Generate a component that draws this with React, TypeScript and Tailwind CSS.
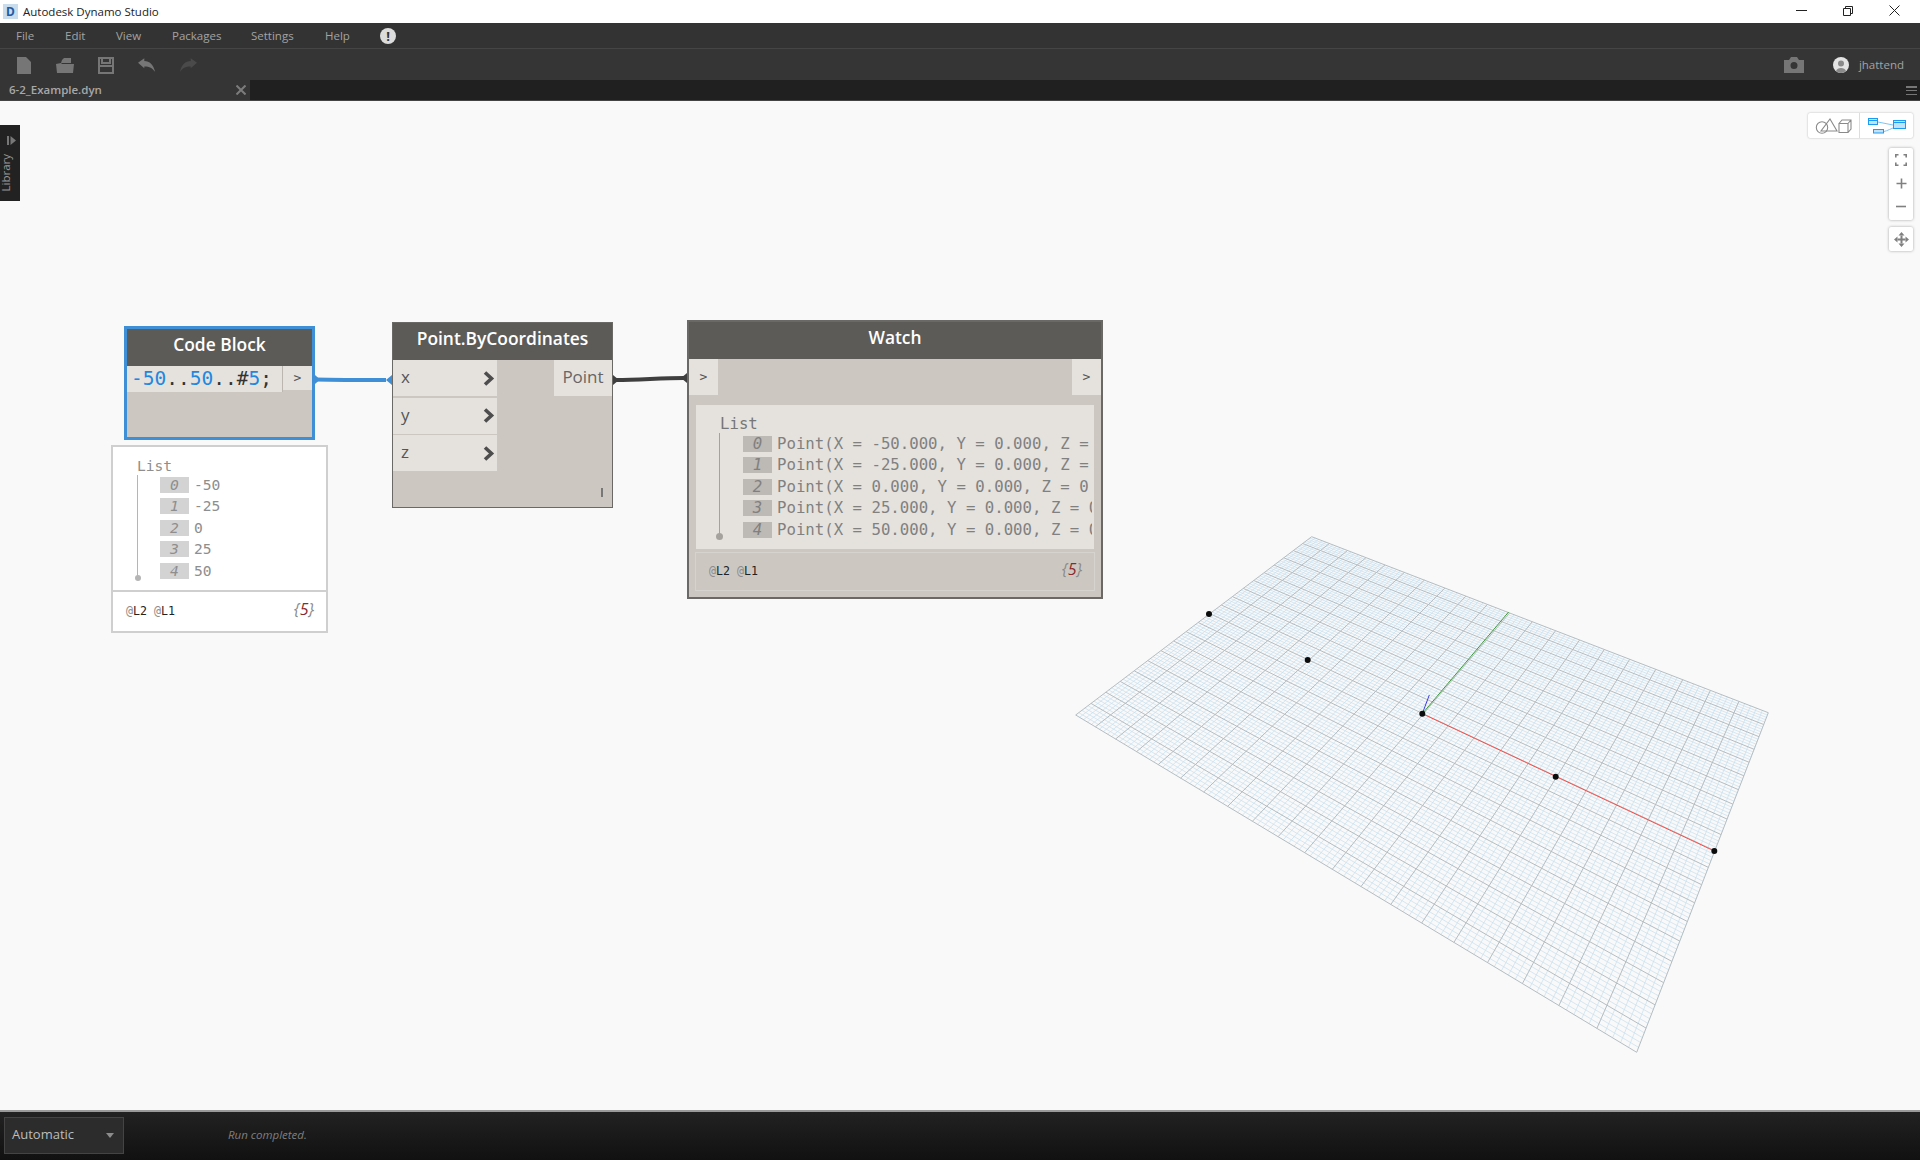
import React from "react";

// corners of the background grid, in page pixels
const quad = { l: [1075.7, 715], b: [1636.7, 1052.3], r: [1768.3, 712.7], t: [1311.7, 536.7] };

function makeProject() {
  const [x0, y0] = quad.l;
  const [x1, y1] = quad.b;
  const [x2, y2] = quad.r;
  const [x3, y3] = quad.t;
  const dx1 = x1 - x2;
  const dx2 = x3 - x2;
  const sx = x0 - x1 + x2 - x3;
  const dy1 = y1 - y2;
  const dy2 = y3 - y2;
  const sy = y0 - y1 + y2 - y3;
  const den = dx1 * dy2 - dx2 * dy1;
  const g = (sx * dy2 - dx2 * sy) / den;
  const h = (dx1 * sy - sx * dy1) / den;
  const a = x1 - x0 + g * x1;
  const b = x3 - x0 + h * x3;
  const d = y1 - y0 + g * y1;
  const e = y3 - y0 + h * y3;
  return (u: number, v: number) => {
    const w = g * u + h * v + 1;
    return [(a * u + b * v + x0) / w, (d * u + e * v + y0) / w];
  };
}

function gridPaths() {
  const p = makeProject();
  let minor = "";
  let major = "";
  for (let i = 0; i <= 100; i++) {
    const t = i / 100;
    const a = p(t, 0);
    const b = p(t, 1);
    const c = p(0, t);
    const d = p(1, t);
    const seg = `M${a[0].toFixed(1)} ${a[1].toFixed(1)}L${b[0].toFixed(1)} ${b[1].toFixed(1)}M${c[0].toFixed(1)} ${c[1].toFixed(1)}L${d[0].toFixed(1)} ${d[1].toFixed(1)}`;
    if (i % 5 === 0) major += seg;
    else minor += seg;
  }
  return { minor, major };
}

const mono = "font-['DejaVu_Sans_Mono',monospace]";
const header =
  "flex h-[37px] items-center justify-center bg-[#5d5b58] pb-[6px] font-['Open_Sans',sans-serif] text-[17.4px] font-semibold text-white";

function Menu() {
  const items = [
    { label: "File", w: "w-[49px]" },
    { label: "Edit", w: "w-[51px]" },
    { label: "View", w: "w-[56px]" },
    { label: "Packages", w: "w-[79px]" },
    { label: "Settings", w: "w-[74px]" },
    { label: "Help", w: "w-[55px]" },
  ];
  return (
    <div className="flex h-[26px] items-center border-b border-[#454545] bg-[#333333] pl-[16px] pt-[1px] font-['Open_Sans',sans-serif] text-[11.5px] text-[#a3a3a3]">
      {items.map((it) => (
        <span key={it.label} className={it.w}>
          {it.label}
        </span>
      ))}
      <span className="flex h-[16px] w-[16px] items-center justify-center rounded-full bg-[#dcdcdc] text-[13px] font-bold leading-none text-[#333333]">
        !
      </span>
    </div>
  );
}

function Toolbar() {
  return (
    <div className="flex h-[31px] items-center justify-between bg-[#353535] pl-[3px] pr-[16px] pt-[1px]">
      <div className="flex items-center">
        <div className="flex w-[41px] justify-center">
          <svg width="14" height="17" viewBox="0 0 14 17" fill="#767676">
            <path d="M0 0h9l5 5v12H0z" />
          </svg>
        </div>
        <div className="flex w-[41px] justify-center">
          <svg width="20" height="17" viewBox="0 0 20 17" fill="#767676">
            <path d="M1 7l5-1 1-3 2-2h7v5H7l-1 1h13l-1 9H2z" />
          </svg>
        </div>
        <div className="flex w-[41px] justify-center">
          <svg width="16" height="17" viewBox="0 0 16 17" fill="none" stroke="#767676" strokeWidth="2">
            <path d="M1 1h14v15H1z" />
            <path d="M4 1v5h8V1M1 9h14" />
          </svg>
        </div>
        <div className="flex w-[41px] justify-center">
          <svg width="18" height="15" viewBox="0 0 20 16" fill="#767676">
            <path d="M0 5l7-5v3c6 0 10 4 12 12-3-4-6-6-12-6v2z" />
          </svg>
        </div>
        <div className="flex w-[41px] justify-center">
          <svg width="18" height="15" viewBox="0 0 20 16" fill="#4a4a4a">
            <path d="M20 5l-7-5v3C7 3 3 7 1 15c3-4 6-6 12-6v2z" />
          </svg>
        </div>
      </div>
      <div className="flex items-center">
        <svg width="22" height="16" viewBox="0 0 22 16" fill="#767676" className="mr-[28px]">
          <path fillRule="evenodd" d="M1 3h5l2-3h6l2 3h5v13H1zM11 5a3.500 3.500 0 100 7 3.500 3.500 0 000-7z" />
        </svg>
        <svg width="16" height="16" viewBox="0 0 16 16" className="mr-[10px]">
          <circle cx="8" cy="8" r="8" fill="#e4e4e4" />
          <circle cx="8" cy="6.500" r="3" fill="#8a8a8a" />
          <path d="M3 14c1-4 9-4 10 0a8 8 0 01-10 0z" fill="#8a8a8a" />
        </svg>
        <span className="font-['Open_Sans',sans-serif] text-[11.5px] text-[#a3a3a3]">jhattend</span>
      </div>
    </div>
  );
}

function TabBar() {
  return (
    <div className="flex h-[21px] border-b border-[#444444] bg-[#202020]">
      <div className="flex w-[250px] items-center justify-between bg-[#353535] pl-[9px] pr-[4px] font-['Open_Sans',sans-serif] text-[11.5px] font-semibold text-[#a8a8a8]">
        <span>6-2_Example.dyn</span>
        <svg width="10" height="10" viewBox="0 0 10 10" stroke="#7c7c7c" strokeWidth="2">
          <path d="M0.500 0.500l9 9M9.500 0.500l-9 9" />
        </svg>
      </div>
      <div className="ml-auto mr-[3px] mt-[6px] flex h-[9px] w-[11px] flex-col justify-between">
        <div className="h-[1.5px] bg-[#777777]" />
        <div className="h-[1.5px] bg-[#777777]" />
        <div className="h-[1.5px] bg-[#777777]" />
      </div>
    </div>
  );
}

function ListRow({ i, text, boxColor }: { i: number; text: string; boxColor: string }) {
  return (
    <div className="flex h-[21.5px] items-center">
      <span className={`flex h-[16px] w-[29px] shrink-0 items-center justify-center italic ${boxColor}`}>{i}</span>
      <span className="ml-[5px] max-w-[315px] overflow-hidden whitespace-pre">{text}</span>
    </div>
  );
}

function Levels() {
  return (
    <span className={`${mono} text-[11.6px] text-[#222222]`}>
      <span className="text-[#8c8c8c]">@</span>L2 <span className="text-[#8c8c8c]">@</span>L1
    </span>
  );
}

function Count() {
  return (
    <span className="mb-[6px] font-['Open_Sans',sans-serif] text-[16px] italic text-[#8b8b8b]">
      {"{"}
      <span className="text-[#8a2a2a]">5</span>
      {"}"}
    </span>
  );
}

function CodeBlock() {
  return (
    <div className="absolute left-[124px] top-[225px] h-[114px] w-[191px] border-[3px] border-[#3f8fd6] bg-[#ccc8c1]">
      <div className={header}>Code Block</div>
      <div className="flex">
        <div className={`h-[26px] w-[156px] border-r border-[#bbb7b0] bg-[#e5e2de] pl-[4px] text-[19.5px] leading-[26px] ${mono} text-[#333333]`}>
          <span className="text-[#1f87e0]">-50</span>..<span className="text-[#1f87e0]">50</span>..#<span className="text-[#1f87e0]">5</span>;
        </div>
        <div className={`flex h-[24px] flex-1 items-center justify-center bg-[#e5e2de] text-[13px] text-[#555555] ${mono}`}>&gt;</div>
      </div>
    </div>
  );
}

function CodePreview() {
  const rows = ["-50", "-25", "0", "25", "50"];
  return (
    <div className={`absolute left-[111px] top-[344px] flex h-[188px] w-[217px] flex-col border-2 border-[#cfcfcf] bg-white ${mono} text-[14.6px] text-[#8e8e8e]`}>
      <div className="relative h-[145px] border-b-2 border-[#cfcfcf] pl-[47px] pt-[27px]">
        <span className="absolute left-[24px] top-[8px]">List</span>
        <div className="absolute bottom-[12px] left-[24px] top-[28px] w-px bg-[#b5b5b5]" />
        <div className="absolute bottom-[9px] left-[22px] h-[6px] w-[6px] rounded-full bg-[#b5b5b5]" />
        {rows.map((r, i) => (
          <ListRow key={i} i={i} text={r} boxColor="bg-[#d3d3d3]" />
        ))}
      </div>
      <div className="flex flex-1 items-center justify-between pl-[13px] pr-[12px]">
        <Levels />
        <Count />
      </div>
    </div>
  );
}

function InPort({ name }: { name: string }) {
  return (
    <div className="flex h-[36px] w-[104px] items-center justify-between bg-[#e5e2de] pb-[2px] pl-[8px] pr-[2px] font-['Open_Sans',sans-serif] text-[17px] text-[#555555]">
      <span>{name}</span>
      <svg width="12" height="15" viewBox="0 0 12 15" fill="none" stroke="#4d4d4d" strokeWidth="3.6" className="mt-[2px]">
        <path d="M2 1.500l6.500 6-6.500 6" />
      </svg>
    </div>
  );
}

function PointNode() {
  return (
    <div className="absolute left-[392px] top-[221px] h-[186px] w-[221px] border border-[#6b6965] bg-[#ccc8c1]">
      <div className={header}>Point.ByCoordinates</div>
      <div className="flex items-start justify-between">
        <div className="flex flex-col gap-[1.5px]">
          <InPort name="x" />
          <InPort name="y" />
          <InPort name="z" />
        </div>
        <div className="flex h-[36px] w-[58px] items-center justify-center bg-[#e5e2de] pb-[2px] font-['Open_Sans',sans-serif] text-[17px] text-[#666666]">
          Point
        </div>
      </div>
      <div className="absolute bottom-[10px] right-[9px] h-[9px] w-[2px] bg-[#777777]" />
    </div>
  );
}

function WatchNode() {
  const rows = [
    "Point(X = -50.000, Y = 0.000, Z =",
    "Point(X = -25.000, Y = 0.000, Z =",
    "Point(X = 0.000, Y = 0.000, Z = 0",
    "Point(X = 25.000, Y = 0.000, Z = 0",
    "Point(X = 50.000, Y = 0.000, Z = 0",
  ];
  return (
    <div className="absolute left-[687px] top-[219px] h-[279px] w-[416px] border-2 border-[#6b6965] bg-[#ccc8c1]">
      <div className={header}>Watch</div>
      <div className={`flex justify-between ${mono} text-[13px] text-[#555555]`}>
        <div className="flex h-[36px] w-[29px] items-center justify-center bg-[#e5e2de]">&gt;</div>
        <div className="flex h-[36px] w-[29px] items-center justify-center bg-[#e5e2de]">&gt;</div>
      </div>
      <div className={`relative mx-[7px] mt-[10px] h-[144px] overflow-hidden bg-[#e5e2de] pl-[47px] pt-[28px] ${mono} text-[15.7px] text-[#808080]`}>
        <span className="absolute left-[24px] top-[7px] text-[#777777]">List</span>
        <div className="absolute bottom-[12px] left-[23px] top-[28px] w-px bg-[#a5a29e]" />
        <div className="absolute bottom-[9px] left-[20px] h-[7px] w-[7px] rounded-full bg-[#a5a29e]" />
        {rows.map((r, i) => (
          <ListRow key={i} i={i} text={r} boxColor="bg-[#bdb9b4]" />
        ))}
      </div>
      <div className="mx-[6px] mt-[3px] flex h-[39px] items-center justify-between border border-[#d6d3ce] pl-[13px] pr-[12px]">
        <Levels />
        <Count />
      </div>
    </div>
  );
}

function GridPlane() {
  const { minor, major } = gridPaths();
  const dots = [
    [1209, 614],
    [1307.7, 660],
    [1422.3, 713.7],
    [1555.7, 776.7],
    [1714.3, 851],
  ];
  return (
    <svg className="absolute inset-0" width="1920" height="1009" viewBox="0 101 1920 1009">
      <path d={minor} stroke="#c6deee" strokeWidth="0.7" fill="none" />
      <path d={major} stroke="#b3bdc3" strokeWidth="1" fill="none" />
      <path d="M1422.3 713.7L1508.6 612" stroke="#3f9a3f" strokeWidth="1" />
      <path d="M1422.3 713.7L1429.3 695" stroke="#3a3ae0" strokeWidth="1" />
      <path d="M1422.3 713.7L1714.3 851" stroke="#f5504f" strokeWidth="1" />
      {dots.map((d, i) => (
        <circle key={i} cx={d[0]} cy={d[1]} r="3" fill="#0c0c0c" />
      ))}
    </svg>
  );
}

function Wires() {
  return (
    <svg className="absolute inset-0" width="1920" height="1009" viewBox="0 101 1920 1009">
      <path d="M315 379.500C340 380 360 380 386 380" stroke="#3f8fd6" strokeWidth="4" fill="none" />
      <path d="M315 375l5 4.500-5 4.500z" fill="#3f8fd6" />
      <path d="M392 375l-6 5 6 5z" fill="#3f8fd6" />
      <path d="M616 380C640 380 660 378 684 378" stroke="#3f3f3f" strokeWidth="4" fill="none" />
      <path d="M613 375l6 5-6 5z" fill="#3f3f3f" />
      <path d="M687 373l-6 5 6 5z" fill="#3f3f3f" />
    </svg>
  );
}

function ViewControls() {
  return (
    <>
      <div className="absolute left-[1808px] top-[12px] flex h-[25px] w-[105px] rounded-[2px] bg-white shadow-[0_0_2px_rgba(0,0,0,0.3)]">
        <div className="flex w-[52px] items-center justify-center border-r border-[#dddddd]">
          <svg width="38" height="16" viewBox="0 0 38 16" fill="none" stroke="#8a8a8a" strokeWidth="1.1">
            <circle cx="7" cy="9.500" r="5.700" />
            <path d="M15 1l7 12H6z" />
            <path d="M24 5.500h9v9h-9zM24 5.500l3-3.500h9v9l-3 3.500M33 5.500l3-3.500" />
          </svg>
        </div>
        <div className="flex flex-1 items-center justify-center">
          <svg width="38" height="16" viewBox="0 0 38 16" fill="none" stroke="#1e9bf0" strokeWidth="1">
            <path d="M10 4l15 3M12 14c5 0 8-2 13-4" stroke="#7cc6f7" />
            <rect x="0.500" y="0.500" width="9" height="6" fill="#bfe3fb" />
            <path d="M0.500 2.500h9" />
            <rect x="25.500" y="2.500" width="12" height="8" fill="#bfe3fb" />
            <path d="M25.500 4.500h12" />
            <rect x="5.500" y="11.500" width="10" height="3.500" fill="#bfe3fb" />
          </svg>
        </div>
      </div>
      <div className="absolute left-[1889px] top-[47px] flex h-[72px] w-[24px] flex-col items-center rounded-[2px] bg-white pt-[6px] shadow-[0_0_3px_rgba(0,0,0,0.35)]">
        <svg width="12" height="12" viewBox="0 0 12 12" fill="none" stroke="#808080" strokeWidth="1.6">
          <path d="M0.800 3.500V0.800h2.700M8.500 0.800h2.700v2.700M11.200 8.500v2.700H8.500M3.500 11.200H0.800V8.500" />
        </svg>
        <svg width="11" height="11" viewBox="0 0 11 11" stroke="#808080" strokeWidth="1.6" className="mt-[12px]">
          <path d="M5.500 0.500v10M0.500 5.500h10" />
        </svg>
        <svg width="10" height="3" viewBox="0 0 10 3" stroke="#808080" strokeWidth="1.6" className="mt-[16px]">
          <path d="M0 1.500h10" />
        </svg>
      </div>
      <div className="absolute left-[1889px] top-[126px] flex h-[24px] w-[24px] items-center justify-center rounded-[2px] bg-white shadow-[0_0_3px_rgba(0,0,0,0.35)]">
        <svg width="15" height="15" viewBox="0 0 15 15" fill="#808080">
          <path d="M6.500 3.500h2v3h3v2h-3v3h-2v-3h-3v-2h3z" />
          <path d="M7.500 0l3 3.500h-6zM7.500 15l3-3.500h-6zM0 7.500l3.500-3v6zM15 7.500l-3.500-3v6z" />
        </svg>
      </div>
    </>
  );
}

function LibraryTab() {
  return (
    <div className="absolute left-0 top-[24px] flex h-[76px] w-[20px] flex-col items-center bg-[#222222] pt-[11px]">
      <svg width="9" height="9" viewBox="0 0 9 9" fill="#777777" className="ml-[2px]">
        <path d="M0 0h2v9H0zM3.500 0L9 4.500 3.500 9z" />
      </svg>
      <span className="mt-[9px] self-start pl-[2px] font-['Open_Sans',sans-serif] text-[11.5px] leading-none text-[#9a9a9a] [writing-mode:vertical-rl] rotate-180">
        Library
      </span>
    </div>
  );
}

export default function App() {
  return (
    <div className="flex h-screen flex-col overflow-hidden bg-[#f9f9f9]">
      {/* window title */}
      <div className="flex h-[23px] items-center justify-between bg-white pl-[3px] pr-[20px]">
        <div className="flex items-center">
          <div className="flex h-[15px] w-[15px] items-center justify-center bg-[#c9dcee] text-[12px] font-bold leading-none text-[#1d5fa6]">
            D
          </div>
          <span className="ml-[5px] font-['Open_Sans',sans-serif] text-[11.5px] text-[#222222]">Autodesk Dynamo Studio</span>
        </div>
        <div className="flex items-center gap-[36px] pb-[2px]">
          <svg width="11" height="11" viewBox="0 0 11 11" stroke="#222222">
            <path d="M0 5.500h11" />
          </svg>
          <svg width="10" height="10" viewBox="0 0 10 10" fill="none" stroke="#222222">
            <path d="M0.500 2.500h7v7h-7zM2.500 2.500v-2h7v7h-2" />
          </svg>
          <svg width="11" height="11" viewBox="0 0 11 11" stroke="#222222">
            <path d="M0.500 0.500l10 10M10.500 0.500l-10 10" />
          </svg>
        </div>
      </div>
      <Menu />
      <Toolbar />
      <TabBar />

      {/* canvas */}
      <div className="relative flex-1 overflow-hidden bg-[#f9f9f9]">
        <GridPlane />
        <Wires />
        <CodeBlock />
        <CodePreview />
        <PointNode />
        <WatchNode />
        <ViewControls />
        <LibraryTab />
      </div>

      {/* status bar */}
      <div className="flex h-[50px] items-center border-t-2 border-[#9a9a9a] bg-gradient-to-b from-[#222222] to-[#111111] pb-[2px] pl-[4px]">
        <div className="flex h-[37px] w-[120px] items-center justify-between border border-[#444444] bg-[#2c2c2c] pl-[7px] pr-[9px] font-['Open_Sans',sans-serif] text-[13px] text-[#bdbdbd]">
          <span>Automatic</span>
          <svg width="8" height="5" viewBox="0 0 8 5" fill="#8c8c8c">
            <path d="M0 0h8L4 5z" />
          </svg>
        </div>
        <span className="ml-[104px] font-['Open_Sans',sans-serif] text-[11.5px] italic text-[#7f7f7f]">Run completed.</span>
      </div>
    </div>
  );
}
